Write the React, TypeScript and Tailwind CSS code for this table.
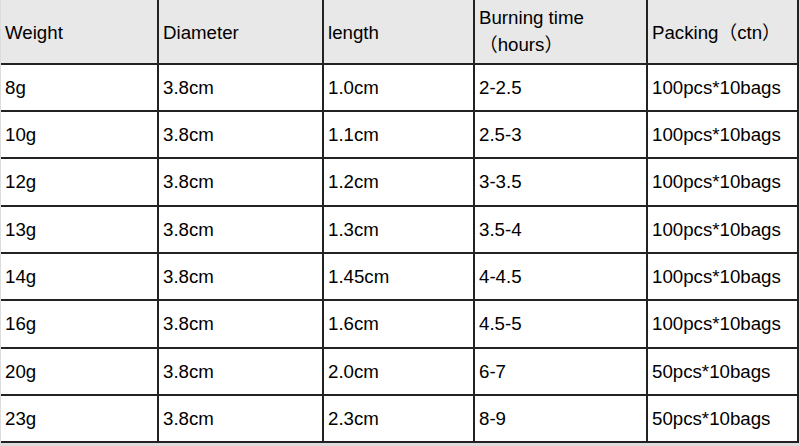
const columns = ['w-[158px]', 'w-[165px]', 'w-[151px]', 'w-[173px]', 'w-[151px]']

const rows: string[][] = [
  ['8g', '3.8cm', '1.0cm', '2-2.5', '100pcs*10bags'],
  ['10g', '3.8cm', '1.1cm', '2.5-3', '100pcs*10bags'],
  ['12g', '3.8cm', '1.2cm', '3-3.5', '100pcs*10bags'],
  ['13g', '3.8cm', '1.3cm', '3.5-4', '100pcs*10bags'],
  ['14g', '3.8cm', '1.45cm', '4-4.5', '100pcs*10bags'],
  ['16g', '3.8cm', '1.6cm', '4.5-5', '100pcs*10bags'],
  ['20g', '3.8cm', '2.0cm', '6-7', '50pcs*10bags'],
  ['23g', '3.8cm', '2.3cm', '8-9', '50pcs*10bags'],
]

const rowHeights = ['h-[47px]', 'h-[47px]', 'h-[48px]', 'h-[47px]', 'h-[47px]', 'h-[48px]', 'h-[47px]', 'h-[47px]']

function Cell({
  children,
  col,
  header,
}: {
  children: React.ReactNode
  col: number
  header?: boolean
}) {
  return (
    <div
      className={`${columns[col]} shrink-0 flex items-center pl-[4px] border-r-2 border-b-2 border-[#222] ${
        header ? 'bg-[#e8e8e8] pt-[3px]' : 'bg-white pt-[1px]'
      }`}
    >
      {children}
    </div>
  )
}

export default function App() {
  return (
    <div
      className="w-[800px] h-[446px] bg-[#dcdcdc] pl-[1px] text-[18.7px] text-black leading-none"
      style={{ fontFamily: '"Liberation Sans", Arial, "Noto Sans CJK SC", sans-serif' }}
    >
      <div className="flex h-[65px]">
        <Cell col={0} header>Weight</Cell>
        <Cell col={1} header>Diameter</Cell>
        <Cell col={2} header>length</Cell>
        <Cell col={3} header>
          <div className="flex flex-col gap-[8px] -mt-[2px]">
            <span>Burning time</span>
            <span>（hours）</span>
          </div>
        </Cell>
        <Cell col={4} header>Packing（ctn）</Cell>
      </div>
      {rows.map((r, i) => (
        <div key={i} className={`flex ${rowHeights[i]}`}>
          {r.map((v, j) => (
            <Cell key={j} col={j}>
              {v}
            </Cell>
          ))}
        </div>
      ))}
    </div>
  )
}
